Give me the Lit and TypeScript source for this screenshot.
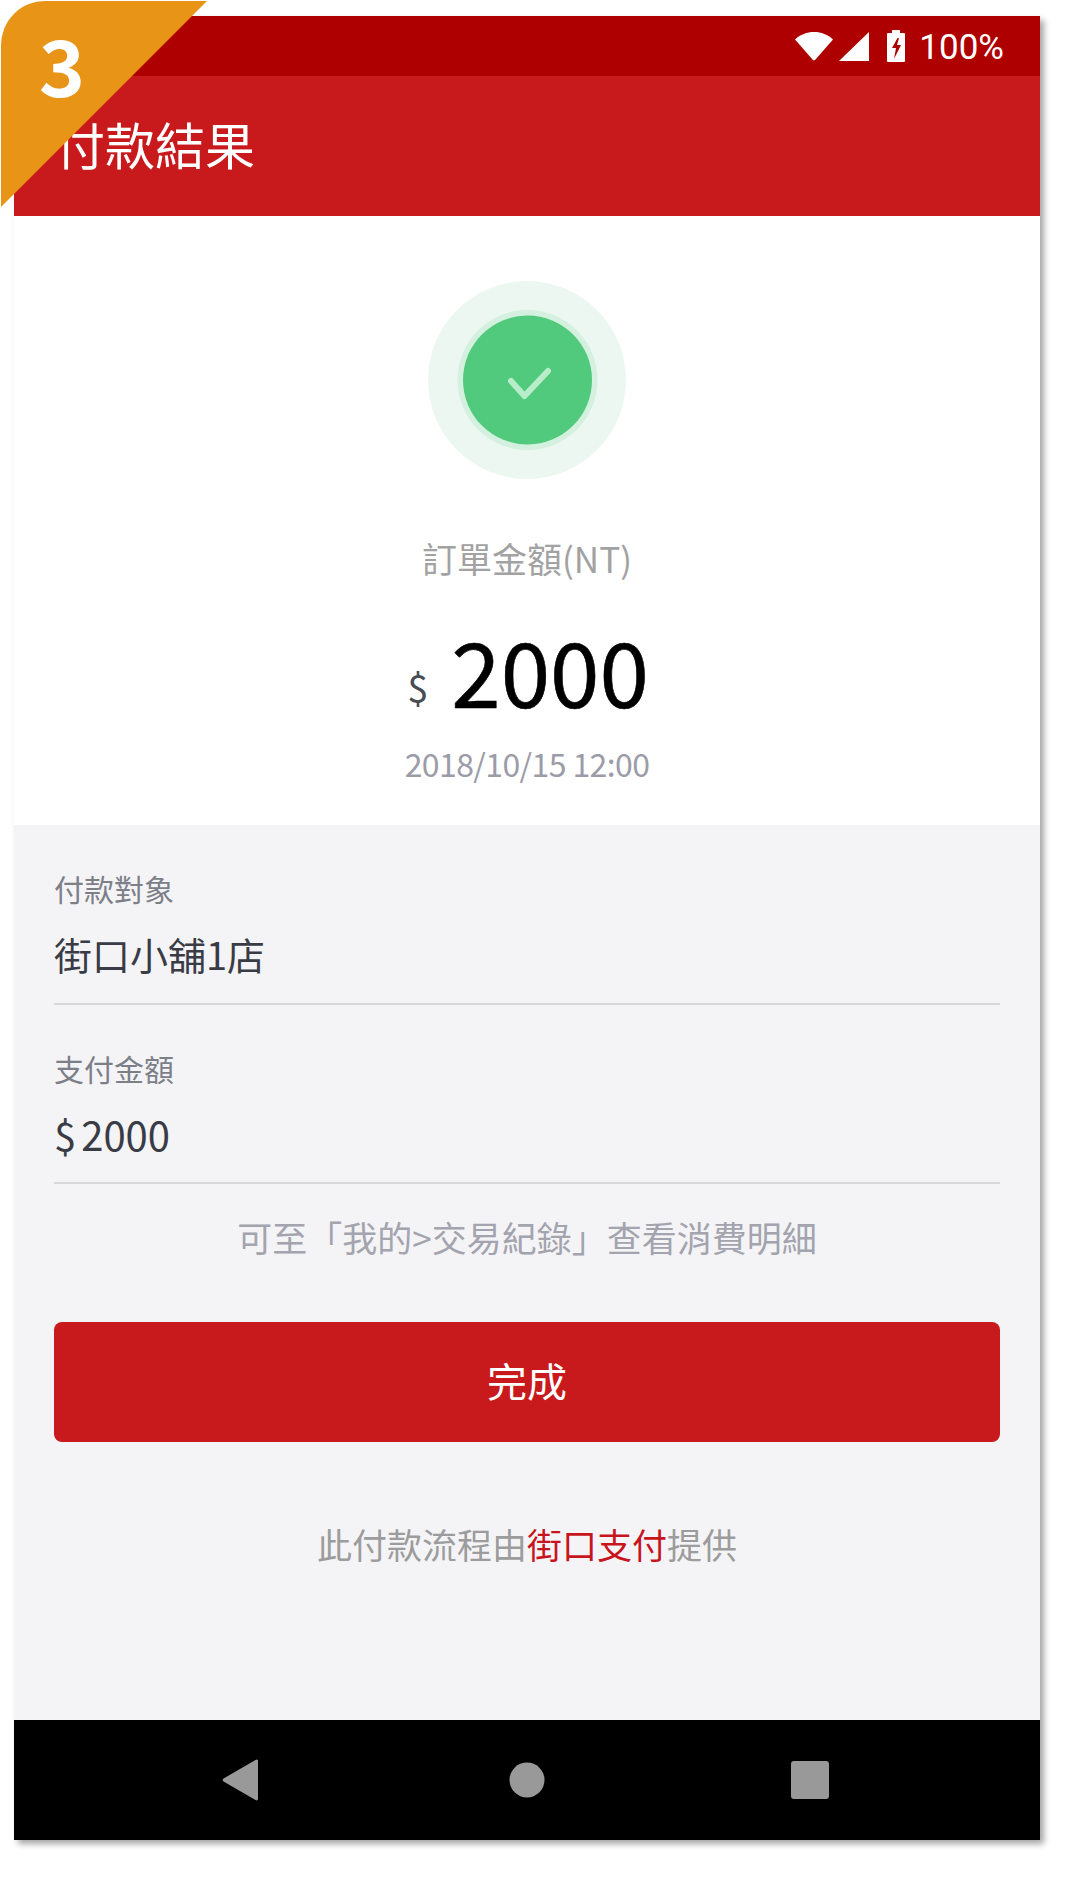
import { css, html, LitElement } from 'lit';
import { customElement } from 'lit/decorators.js';

@customElement('app-root')
export class AppRoot extends LitElement {
  static styles = css`
    :host {
      display: block;
      position: relative;
      height: 1888px;
      background: #fff;
      font-family: 'Noto Sans CJK TC', 'Noto Sans', sans-serif;
    }
    .phone {
      position: absolute;
      left: 14px;
      top: 16px;
      width: 1026px;
      height: 1824px;
      display: flex;
      flex-direction: column;
      box-shadow: 4px 4px 6px rgba(0, 0, 0, 0.35);
    }
    .status {
      height: 60px;
      box-sizing: border-box;
      background: #af0000;
      color: #fff;
      display: flex;
      align-items: center;
      justify-content: flex-end;
      padding-right: 36px;
      font: 35px Roboto, sans-serif;
    }
    .status svg {
      display: block;
    }
    .status span {
      padding-top: 2px;
    }
    .wifi {
      margin-right: 5px;
    }
    .signal {
      margin-right: 18px;
    }
    .battery {
      margin-right: 14px;
    }
    .appbar {
      height: 140px;
      background: #c81a1c;
      color: #fff;
      display: flex;
      align-items: center;
      padding-left: 41px;
      padding-bottom: 6px;
      box-sizing: border-box;
      font-size: 50px;
    }
    .summary {
      height: 609px;
      background: #fff;
      display: flex;
      flex-direction: column;
      align-items: center;
    }
    .check {
      margin-top: 65px;
      display: block;
    }
    .order-label {
      margin-top: 54px;
      font-size: 35px;
      line-height: 50px;
      color: #a2a2a2;
    }
    .amount {
      margin-top: 32px;
      display: flex;
      align-items: baseline;
      height: 110px;
      line-height: 110px;
      color: #000;
      font-size: 89px;
      -webkit-text-stroke: 0.6px #000;
      padding-left: 2px;
    }
    .amount .cur {
      font-size: 38px;
      color: #4a4c55;
      margin-right: 23px;
      position: relative;
      top: -5px;
      -webkit-text-stroke: 0;
    }
    .date {
      margin-top: 16px;
      font-size: 32px;
      line-height: 44px;
      letter-spacing: -0.6px;
      color: #9c9ca8;
    }
    .details {
      flex: 1;
      background: #f4f4f7;
      padding: 43px 40px 0;
    }
    .field {
      height: 134px;
      border-bottom: 2px solid #d8d8da;
      margin-bottom: 43px;
    }
    .field:first-child {
      height: 135px;
    }
    .field .label {
      font-size: 30px;
      line-height: 40px;
      color: #7d7f88;
    }
    .field .value {
      margin-top: 21px;
      font-size: 38px;
      line-height: 50px;
      color: #3a3c45;
    }
    .field .value .money {
      font-size: 40px;
      display: flex;
      align-items: baseline;
      gap: 5px;
    }
    .hint {
      margin-top: -15px;
      text-align: center;
      font-size: 35px;
      line-height: 50px;
      color: #a3a4ae;
    }
    .done {
      margin-top: 60px;
      height: 120px;
      box-sizing: border-box;
      padding-bottom: 5px;
      border-radius: 8px;
      background: #c81a1c;
      color: #fff;
      font-size: 40px;
      display: flex;
      align-items: center;
      justify-content: center;
    }
    .credit {
      margin-top: 77px;
      text-align: center;
      font-size: 35px;
      line-height: 50px;
      color: #9c9c9c;
    }
    .credit b {
      font-weight: 400;
      color: #c8141c;
    }
    .nav {
      height: 120px;
      background: #000;
      display: flex;
      align-items: center;
      position: relative;
    }
    .nav svg {
      position: absolute;
      left: 0;
      top: 0;
    }
    .badge {
      position: absolute;
      left: 0;
      top: 0;
    }
    .badge-num {
      position: absolute;
      left: 39px;
      top: 4px;
      color: #fff;
      font-size: 78px;
      font-weight: 700;
      line-height: 118px;
    }
  `;

  render() {
    return html`
      <div class="phone">
        <div class="status">
          <svg class="wifi" width="40" height="30" viewBox="0 0 40 30">
            <path d="M1 8.500C6 3.500 13 1 20 1s14 2.500 19 7.500L21.500 28.500a2 2 0 0 1-3 0z" fill="#fff" />
          </svg>
          <svg class="signal" width="30" height="30" viewBox="0 0 30 30">
            <path d="M30 1v29H0z" fill="#fff" />
          </svg>
          <svg class="battery" width="18" height="32" viewBox="0 0 18 32">
            <path
              d="M5 0h8v3h4a1 1 0 0 1 1 1v27a1 1 0 0 1-1 1H1a1 1 0 0 1-1-1V4a1 1 0 0 1 1-1h4z"
              fill="#fff"
            />
            <path d="M10.500 8 5 18h4l-2 11 7-14h-4l2-7z" fill="#af0000" />
          </svg>
          <span>100%</span>
        </div>
        <div class="appbar">付款結果</div>
        <div class="summary">
          <svg class="check" width="198" height="198" viewBox="0 0 198 198">
            <circle cx="99" cy="99" r="99" fill="#edf7f1" />
            <circle cx="99.500" cy="99" r="70" fill="#d3f1de" />
            <circle cx="99.500" cy="99" r="64.500" fill="#52ca7d" />
            <path
              d="M83 100l13.500 15L120 90"
              fill="none"
              stroke="#b8edca"
              stroke-width="6"
              stroke-linecap="round"
              stroke-linejoin="round"
            />
          </svg>
          <div class="order-label">訂單金額(NT)</div>
          <div class="amount"><span class="cur">$</span><span>2000</span></div>
          <div class="date">2018/10/15 12:00</div>
        </div>
        <div class="details">
          <div class="field">
            <div class="label">付款對象</div>
            <div class="value">街口小舖1店</div>
          </div>
          <div class="field">
            <div class="label">支付金額</div>
            <div class="value"><div class="money"><span>$</span><span>2000</span></div></div>
          </div>
          <div class="hint">可至「我的&gt;交易紀錄」查看消費明細</div>
          <div class="done">完成</div>
          <div class="credit">此付款流程由<b>街口支付</b>提供</div>
        </div>
        <div class="nav">
          <svg width="1026" height="120" viewBox="0 0 1026 120">
            <path
              d="M244 25.500v37.500a1.500 1.500 0 0 1-2.500 1L209.500 45.500a2 2 0 0 1 0-3L241.500 24a1.500 1.500 0 0 1 2.500 1.500z"
              fill="#999"
              transform="translate(0 16)"
            />
            <circle cx="513" cy="60" r="17.500" fill="#999" />
            <rect x="777" y="41" width="38" height="38" rx="3" fill="#999" />
          </svg>
        </div>
      </div>
      <svg class="badge" width="208" height="208" viewBox="0 0 208 208">
        <path d="M1 45A44 44 0 0 1 45 1H207L1 207z" fill="#e89417" />
      </svg>
      <div class="badge-num">3</div>
    `;
  }
}
